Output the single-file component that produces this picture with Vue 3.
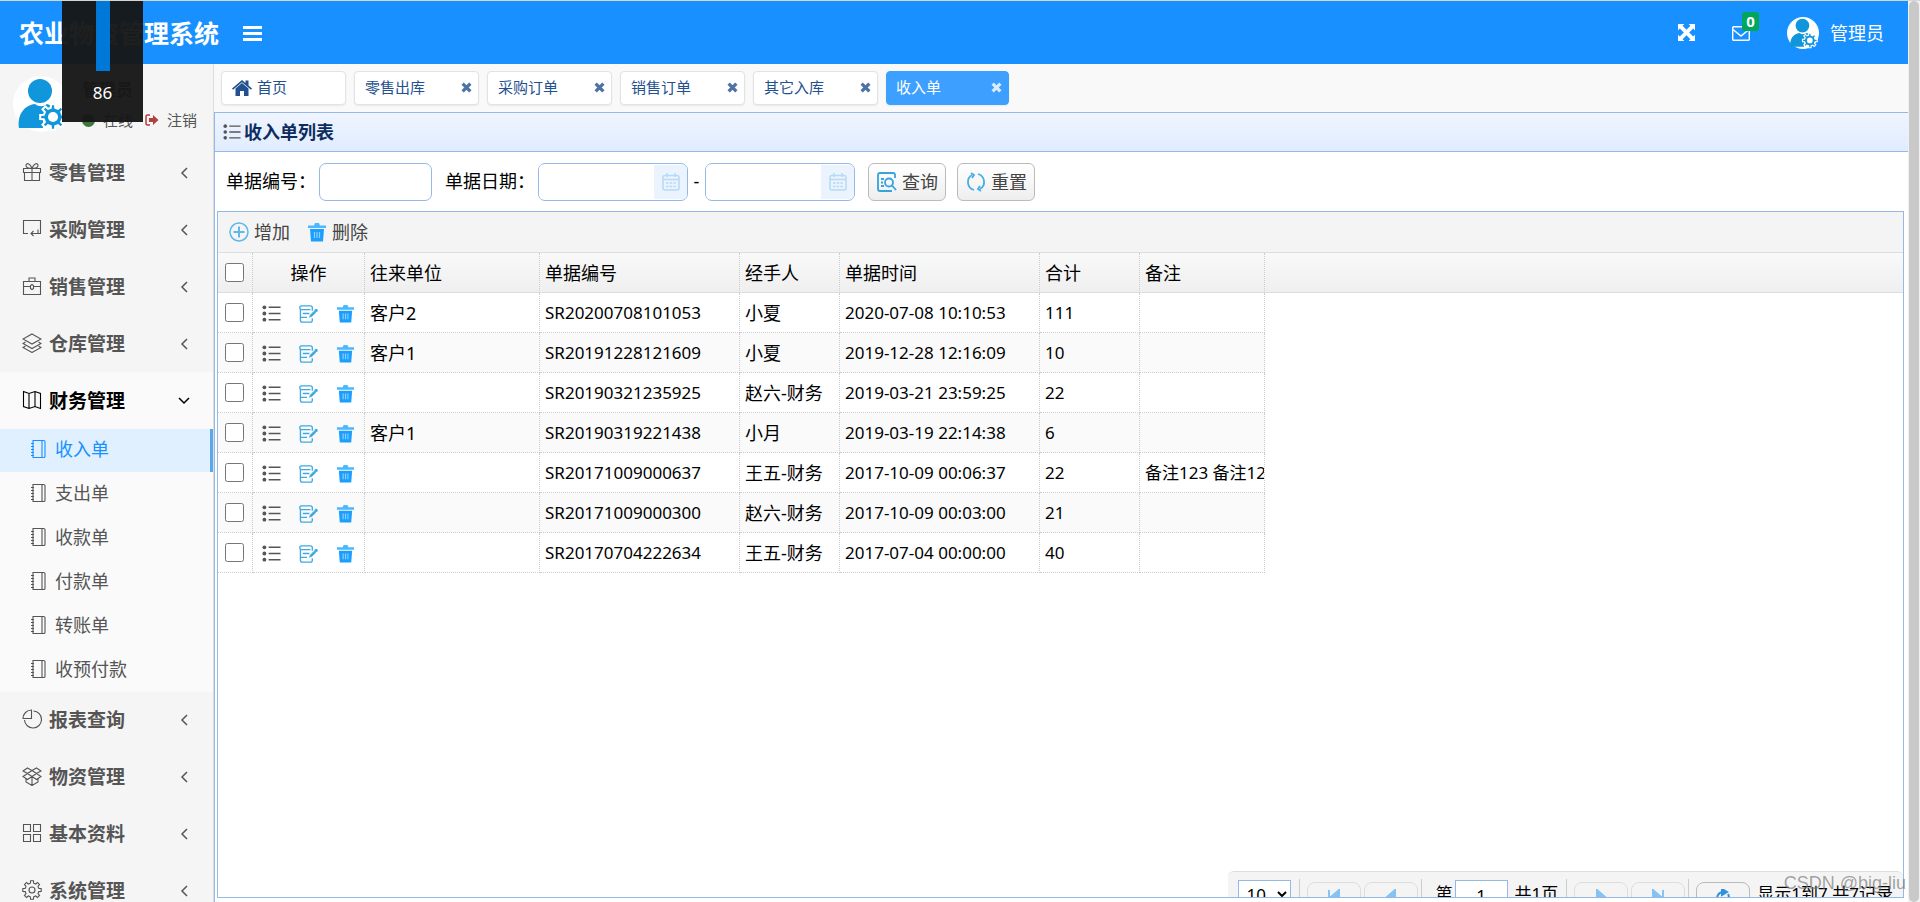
<script setup>
import { ref } from 'vue'

const gear = (cx, cy, outer, inner, teeth) => {
  const step = (Math.PI * 2) / teeth
  const pts = []
  for (let i = 0; i < teeth; i++) {
    const a = i * step - Math.PI / 2
    for (const [k, r] of [[-0.3, inner], [-0.2, outer], [0.2, outer], [0.3, inner]]) {
      pts.push((cx + r * Math.cos(a + k * step)).toFixed(2) + ' ' + (cy + r * Math.sin(a + k * step)).toFixed(2))
    }
  }
  return 'M' + pts.join('L') + 'Z'
}

const icons = {
  gift: 'M1.5 6.5h17v4h-17zM2.5 10.5v8h15v-8M10 6.5v12M10 6.5C8 1 4 .5 4 3.5c0 2 2 3 6 3M10 6.500c2-5.500 6-6 6-3 0 2-2 3-6 3',
  board: 'M6 14.500H1.500v-13h17v13H16M16 10.500v4H9M11.500 12L9 14.500l2.500 2.500',
  brief: 'M1.500 5.500h17v13h-17zM7 5.500v-3.500h6v3.500M1.500 10.500h7M11.500 10.500h7M10 8.500l1.500 1v3L10 13.500l-1.500-1v-3z',
  layers: 'M10 1l9 5-9 5-9-5zM3.500 9L1 10.500l9 5 9-5L16.500 9M3.500 13L1 14.500l9 5 9-5L16.500 13',
  map: 'M1.500 1.500L7 3.500l6-2 5.500 2v15l-5.500-2-6 2-5.500-2zM7 3.500v15M13 1.500v15',
  pie: 'M11.500 2A8.500 8.500 0 1 1 2.500 11M9.500 1v8.500H1A8.500 8.500 0 0 1 9.500 1z',
  box: 'M5.500 2L10 4.500 5.500 7.500 1 5zM14.500 2L19 5l-4.500 2.500L10 4.500zM5.500 7.500L10 10.500l-4.500 3L1 10.500zM14.500 7.500L19 10.500l-4.500 3-4.500-3zM4 13v3l6 3.500 6-3.500v-3M10 11v8',
  grid: 'M1.500 1.500h7v7h-7zM11.500 1.500h7v7h-7zM1.500 11.500h7v7h-7zM11.500 11.500h7v7h-7z',
  gear: gear(10, 10, 9.3, 7, 8) + 'M13 10a3 3 0 1 1-6 0a3 3 0 1 1 6 0z',
}

const menu = [
  { name: '零售管理', icon: 'gift' },
  { name: '采购管理', icon: 'board' },
  { name: '销售管理', icon: 'brief' },
  { name: '仓库管理', icon: 'layers' },
  { name: '财务管理', icon: 'map', children: ['收入单', '支出单', '收款单', '付款单', '转账单', '收预付款'] },
  { name: '报表查询', icon: 'pie' },
  { name: '物资管理', icon: 'box' },
  { name: '基本资料', icon: 'grid' },
  { name: '系统管理', icon: 'gear' },
]
const open = ref('财务管理')

const tabs = ['首页', '零售出库', '采购订单', '销售订单', '其它入库', '收入单']

const rows = [
  { unit: '客户2', no: 'SR20200708101053', by: '小夏', time: '2020-07-08 10:10:53', sum: '111', memo: '' },
  { unit: '客户1', no: 'SR20191228121609', by: '小夏', time: '2019-12-28 12:16:09', sum: '10', memo: '' },
  { unit: '', no: 'SR20190321235925', by: '赵六-财务', time: '2019-03-21 23:59:25', sum: '22', memo: '' },
  { unit: '客户1', no: 'SR20190319221438', by: '小月', time: '2019-03-19 22:14:38', sum: '6', memo: '' },
  { unit: '', no: 'SR20171009000637', by: '王五-财务', time: '2017-10-09 00:06:37', sum: '22', memo: '备注123 备注123' },
  { unit: '', no: 'SR20171009000300', by: '赵六-财务', time: '2017-10-09 00:03:00', sum: '21', memo: '' },
  { unit: '', no: 'SR20170704222634', by: '王五-财务', time: '2017-07-04 00:00:00', sum: '40', memo: '' },
]
</script>

<template>
  <div class="page">
    <svg class="defs" aria-hidden="true">
      <symbol id="avatar" viewBox="0 0 56 56">
        <circle cx="28" cy="28" r="28" fill="#fff" />
        <circle cx="27" cy="15" r="12" fill="#1296db" />
        <path d="M6 52C4 38 12 29 22 28c4 3 8 3 12 0 4 1 7 3 9 5l-13 6v13z" fill="#1296db" />
        <path :d="gear(40, 41, 13, 9.5, 8)" fill="#1296db" stroke="#fff" stroke-width="2" />
        <circle cx="40" cy="41" r="5" fill="#fff" />
      </symbol>
      <symbol id="trash" viewBox="0 0 20 20">
        <path d="M7 3.500L8 1h4l1 2.500h6V6H1V3.500z" fill="#4db8ff" />
        <path d="M3 7h14l-1 12.500H4z" fill="#1a9fff" />
        <path d="M7.500 10v6M10 10v6M12.500 10v6" stroke="#8fd0ff" stroke-width="1.200" />
      </symbol>
      <symbol id="list" viewBox="0 0 20 20">
        <path d="M7 3.500h12.500M7 10h12.500M7 16.500h12.500" stroke="#555" stroke-width="1.600" />
        <g fill="#555"><circle cx="2.500" cy="3.500" r="2" /><circle cx="2.500" cy="10" r="2" /><circle cx="2.500" cy="16.500" r="2" /></g>
      </symbol>
      <symbol id="edit" viewBox="0 0 20 20">
        <path d="M14 7V4q0-2-2-2H2.500Q.8 2 .8 4q0 2 2 2H12M1.500 6v11q0 2 2 2H12q2 0 2-2v-2M4 10h7M1.500 14h7" fill="none" stroke="#3fa9e0" stroke-width="1.400" />
        <path d="M10.500 14.500l1-3 4.500-4.500 2 2-4.500 4.500z" fill="#3fa9e0" /><circle cx="18" cy="6.800" r="1.700" fill="#3fa9e0" />
      </symbol>
    </svg>

    <div class="shell">
      <header class="top">
        <h1>农业物资管理系统</h1>
        <button class="burger" aria-label="菜单"><i></i><i></i><i></i></button>
        <div class="tools">
          <button class="full" aria-label="全屏">
            <svg viewBox="0 0 16 16" width="17" height="17" fill="#fff"><path d="M0 0h6L4.300 1.700 8 5.500l3.700-3.800L10 0h6v6l-1.700-1.700L10.500 8l3.800 3.700L16 10v6h-6l1.700-1.700L8 10.500l-3.700 3.800L6 16H0v-6l1.700 1.700L5.500 8 1.700 4.300 0 6z" /></svg>
          </button>
          <button class="mail" aria-label="消息">
            <svg viewBox="0 0 18 15" width="18" height="15" fill="none" stroke="#fff" stroke-width="1.400"><rect x=".7" y=".7" width="16.600" height="13.600" rx="1" /><path d="M1 3.500l8 6.500 8-6.500" /></svg>
            <span class="badge">0</span>
          </button>
          <a href="#" class="me"><svg width="32" height="32"><use href="#avatar" /></svg>管理员</a>
        </div>
      </header>

      <div class="main">
        <aside class="side">
          <div class="user">
            <svg class="face" width="56" height="56"><use href="#avatar" /></svg>
            <div>
              <strong>管理员</strong>
              <p>
                <a href="#"><i class="dot"></i>在线</a>
                <a href="#"><svg viewBox="0 0 14 12" width="14" height="12"><path d="M5 1H2.500Q1 1 1 2.500v7Q1 11 2.500 11H5" fill="none" stroke="#b0413e" stroke-width="1.500" /><path d="M4 4h4V1l5.500 5L8 11V8H4z" fill="#b0413e" /></svg>注销</a>
              </p>
            </div>
          </div>
          <nav>
            <div v-for="m in menu" :key="m.name" class="group" :class="{ open: open === m.name }">
              <button class="item" @click="open = m.name">
                <svg class="ico" viewBox="0 0 20 20"><path :d="icons[m.icon]" /></svg>
                <span>{{ m.name }}</span>
                <svg v-if="open === m.name" class="arrow" viewBox="0 0 12 12"><path d="M1 3l5 5 5-5" /></svg>
                <svg v-else class="arrow" viewBox="0 0 12 12"><path d="M9 1L4 6l5 5" /></svg>
              </button>
              <div v-if="m.children && open === m.name" class="subs">
                <a v-for="(c, i) in m.children" :key="c" href="#" :class="{ on: i === 0 }">
                  <svg viewBox="0 0 16 20" width="16" height="20"><path d="M3 1.500h10.500q1.500 0 1.500 1v15q0 1-1.500 1H3zM12 1.500v17M1 4.500h3M1 7.500h3M1 10.500h3M1 13.500h3M1 16.500h3" /></svg>{{ c }}
                </a>
              </div>
            </div>
          </nav>
        </aside>

        <section class="work">
          <div class="tabs">
            <a v-for="(t, i) in tabs" :key="t" href="#" class="tab" :class="{ on: i === 5 }">
              <svg v-if="i === 0" class="home" viewBox="0 0 20 17"><path d="M10 4l6.500 5.500V17h-4.500v-5H8v5H3.500V9.500z" /><path d="M0 9.500L10 1l3.500 3V1.500h3v5L20 9.500l-1 1.200L10 3.200 1 10.700z" /></svg>
              <span>{{ t }}</span>
              <svg v-if="i > 0" class="x" viewBox="0 0 10 10"><path d="M1.500 1.500l7 7M8.500 1.500l-7 7" /></svg>
            </a>
          </div>
          <div class="panel">
            <h2><svg width="18" height="18"><use href="#list" /></svg>收入单列表</h2>
            <form class="search" @submit.prevent>
              <label for="no">单据编号：</label>
              <input id="no" class="box" type="text" />
              <label for="from" class="second">单据日期：</label>
              <span v-for="(id, i) in ['from', 'to']" :key="id" class="range">
                <span v-if="i" class="dash">-</span>
                <span class="date">
                  <input :id="id" type="text" :aria-label="i ? '结束日期' : '开始日期'" />
                  <button type="button" aria-label="选择日期">
                    <svg viewBox="0 0 18 18" width="18" height="18" fill="none" stroke="#b5dcf5" stroke-width="1.600"><rect x="1" y="2.500" width="16" height="14.500" rx="2" /><path d="M1 6.500h16M5 0v4M13 0v4" /><path d="M4 10h10M4 13.500h10" stroke-dasharray="2.500 1.200" /></svg>
                  </button>
                </span>
              </span>
              <button class="btn first" type="submit">
                <svg viewBox="0 0 20 20" width="20" height="20" fill="none" stroke="#36a3dc" stroke-width="1.800"><path d="M18 6V3q0-2-2-2H3Q1 1 1 3v14q0 2 2 2h12M4 7h3M4 10.500h2M4 14h3" /><circle cx="12" cy="10.500" r="4" /><path d="M15 13.500l4 4.500" /></svg>查询
              </button>
              <button class="btn" type="reset">
                <svg viewBox="0 0 20 20" width="20" height="20" fill="none" stroke="#45aee2" stroke-width="1.800"><path d="M8 18A8.200 8.200 0 0 1 6 3M12 2a8.200 8.200 0 0 1 2 15" /><path d="M5 1l3 2-2 3M15 19l-3-2 2-3" /></svg>重置
              </button>
            </form>

            <div class="grid">
              <div class="bar">
                <button><svg viewBox="0 0 20 20" width="20" height="20" fill="none" stroke="#5fb8e8"><circle cx="10" cy="10" r="9" stroke-width="1.500" /><path d="M10 4.500v11M4.500 10h11" stroke-width="2" /></svg>增加</button>
                <button><svg width="20" height="20"><use href="#trash" /></svg>删除</button>
              </div>
              <div class="body">
                <table>
                  <colgroup>
                    <col class="c35" /><col class="c112" /><col class="c175" /><col class="c200" /><col class="c100" /><col class="c200" /><col class="c100" /><col class="c125" /><col />
                  </colgroup>
                  <thead>
                    <tr>
                      <th class="chk"><input type="checkbox" aria-label="全选" /></th>
                      <th class="mid">操作</th>
                      <th>往来单位</th><th>单据编号</th><th>经手人</th><th>单据时间</th><th>合计</th><th>备注</th><th class="rest"></th>
                    </tr>
                  </thead>
                  <tbody>
                    <tr v-for="r in rows" :key="r.no">
                      <td class="chk"><input type="checkbox" :aria-label="r.no" /></td>
                      <td class="ops">
                        <div>
                          <button aria-label="查看"><svg><use href="#list" /></svg></button>
                          <button aria-label="编辑"><svg><use href="#edit" /></svg></button>
                          <button aria-label="删除"><svg><use href="#trash" /></svg></button>
                        </div>
                      </td>
                      <td>{{ r.unit }}</td>
                      <td class="num">{{ r.no }}</td>
                      <td>{{ r.by }}</td>
                      <td class="num">{{ r.time }}</td>
                      <td class="num">{{ r.sum }}</td>
                      <td class="memo">{{ r.memo }}</td>
                    </tr>
                  </tbody>
                </table>
              </div>
              <div class="pager">
                <select aria-label="每页条数"><option>10</option></select>
                <i class="sep"></i>
                <button aria-label="第一页"><svg viewBox="0 0 16 16"><path d="M3 1v14M13 1v14L5 8z" /></svg></button>
                <button aria-label="上一页"><svg viewBox="0 0 16 16"><path d="M12 1v14L4 8z" /></svg></button>
                <i class="sep tight"></i>
                <label for="pg">第</label><input id="pg" type="text" value="1" /><span class="total">共1页</span>
                <i class="sep"></i>
                <button aria-label="下一页"><svg viewBox="0 0 16 16"><path d="M4 1v14l8-7z" /></svg></button>
                <button aria-label="最后一页"><svg viewBox="0 0 16 16"><path d="M13 1v14M3 1v14l8-7z" /></svg></button>
                <i class="sep tight"></i>
                <button class="live" aria-label="刷新"><svg viewBox="0 0 16 16"><path class="ring" d="M3 12A6 6 0 0 1 8 3M13 5a6 6 0 0 1-5 9" /><path d="M7 0l5 3-5 3z" /></svg></button>
                <span class="info">显示1到7,共7记录</span>
              </div>
            </div>
          </div>
        </section>
      </div>
    </div>
    <div class="scroll"><i></i></div>

    <div class="volume"><i></i><span>86</span></div>
    <div class="mark">CSDN @big-liu</div>
  </div>
</template>

<style>
body { margin: 0; overflow: hidden; }
</style>

<style scoped>
* { box-sizing: border-box; }
.page { display: flex; position: relative; height: 100vh; overflow: hidden; border-top: 1px solid #d6d6d6; background: #fff; color: #000; font: 400 18px/24px "Noto Sans", "Noto Sans CJK SC", sans-serif; }
.defs { position: absolute; width: 0; height: 0; }
svg { display: block; flex: none; }
button { padding: 0; border: 0; background: none; color: inherit; font: inherit; cursor: pointer; }
a { color: inherit; text-decoration: none; }
.shell { display: flex; flex-direction: column; flex: 1; min-width: 0; }
.scroll { flex: 0 0 12px; padding: 0 1px; background: #f1f1f1; }
.scroll i { display: block; height: 100%; border-radius: 5px; background: #c9c9c9; }

.top { display: flex; align-items: center; flex: 0 0 63px; padding: 0 24px 0 19px; background: #1890ff; color: #fff; }
h1 { margin: 0; font-size: 25px; line-height: 32px; font-weight: 700; }
.burger { display: grid; gap: 3px; width: 19px; margin: 2px 0 0 24px; }
.burger i { height: 3px; background: #fff; }
.tools { display: flex; align-items: center; margin-left: auto; }
.mail { position: relative; margin: 2px 37px 0; }
.badge { position: absolute; left: 10px; top: -14px; width: 17px; border-radius: 3px; background: #00a65a; font-size: 15px; line-height: 19px; font-weight: 700; }
.me { display: flex; align-items: center; gap: 11px; }

.main { display: flex; flex: 1; min-height: 0; }
.side { flex: 0 0 214px; overflow: hidden; border-right: 1px solid #ddd; background: #f5f5f5; color: #555; }
.user { display: flex; gap: 13px; height: 80px; padding: 12px 0 0 13px; font-size: 15px; line-height: 20px; }
.user strong { display: block; margin-top: 4px; font-size: 17px; }
.user p { display: flex; gap: 12px; margin: 10px 0 0; }
.user a { display: flex; align-items: center; gap: 8px; }
.dot { width: 13px; height: 13px; border-radius: 50%; background: #3c763d; }
.item { display: flex; align-items: center; width: 100%; height: 57px; padding: 0 22px; font-size: 19px; font-weight: 700; }
.item span { margin-left: 7px; }
.ico { width: 20px; height: 20px; margin-bottom: 2px; fill: none; stroke: currentColor; stroke-width: 1.1; }
.arrow { width: 14px; height: 12px; margin-left: auto; fill: none; stroke: currentColor; stroke-width: 1.5; }
.open { background: #fafafa; }
.open .item { color: #000; }
.subs { display: grid; gap: 1px; margin-bottom: -1px; }
.subs a { display: flex; align-items: center; gap: 9px; height: 43px; padding: 0 0 3px 30px; }
.subs svg { fill: none; stroke: currentColor; stroke-width: 1.1; }
.subs .on { border-right: 3px solid #5aa7ee; background: #e0f0ff; color: #1890ff; }

.work { display: flex; flex-direction: column; flex: 1; min-width: 0; }
.tabs { display: flex; gap: 8px; flex: 0 0 48px; padding: 7px 7px; background: #f9f9f9; }
.tab { display: flex; align-items: center; width: 125px; height: 34px; padding: 0 6px 2px 10px; border: 1px solid #e3e3e3; border-radius: 4px; background: #fff; box-shadow: 0 1px 2px #0001; color: #23508e; font-size: 15px; line-height: 20px; }
.tab.on { width: 123px; padding-left: 9px; border-color: #3d9fff; background: #3d9fff; color: #fff; }
.home { width: 20px; height: 17px; margin-right: 5px; fill: currentColor; }
.x { width: 11px; height: 11px; margin-left: auto; fill: none; stroke: currentColor; stroke-width: 3; opacity: .8; }

.panel { display: flex; flex-direction: column; flex: 1; min-height: 0; border-top: 1px solid #95b8e7; border-left: 1px solid #95b8e7; }
h2 { display: flex; align-items: center; gap: 3px; flex: 0 0 39px; margin: 0; padding-left: 8px; border-bottom: 1px solid #95b8e7; background: linear-gradient(#eff5ff, #e0ecff); color: #0e2d5f; font-size: 18px; line-height: 24px; font-weight: 700; }
.search { display: flex; align-items: center; padding: 11px 11px 10px; }
.search label { width: 93px; padding-bottom: 3px; white-space: nowrap; }
.search .second { margin-left: 13px; }
.box, .date { height: 38px; border: 1px solid #95b8e7; border-radius: 7px; background: #fff; overflow: hidden; }
.box { width: 113px; padding: 0 6px; font: inherit; }
.range { display: flex; align-items: center; }
.dash { width: 17px; padding-bottom: 3px; text-align: center; }
.date { display: flex; width: 150px; padding: 1px 0; }
.date input { flex: 1; min-width: 0; padding: 0 5px; border: 0; font: inherit; }
.date button { display: grid; place-items: center; width: 33px; background: #ebf3ff; }
.btn { display: flex; align-items: center; gap: 5px; height: 38px; margin-left: 11px; padding: 0 7px 0 8px; border: 1px solid #bbb; border-radius: 6px; background: linear-gradient(#fff, #eee); color: #444; }
.btn.first { margin-left: 13px; }

.grid { display: flex; flex-direction: column; flex: 1; min-height: 0; margin: 0 4px 4px 2px; border: 1px solid #95b8e7; }
.bar { display: flex; gap: 17px; flex: 0 0 41px; padding-left: 11px; border-bottom: 1px solid #ddd; background: #f4f4f4; color: #444; }
.bar button { display: flex; align-items: center; gap: 5px; }
.body { flex: 1; min-height: 0; overflow: hidden; }
table { width: 100%; border-spacing: 0; table-layout: fixed; }
.c35 { width: 35px; } .c112 { width: 112px; } .c175 { width: 175px; } .c200 { width: 200px; } .c100 { width: 100px; } .c125 { width: 125px; }
th, td { height: 40px; padding: 0 5px; border-right: 1px dotted #ccc; border-bottom: 1px dotted #ccc; overflow: hidden; white-space: nowrap; text-align: left; font-weight: inherit; }
th { border-bottom: 1px solid #ddd; background: linear-gradient(#f9f9f9, #efefef); }
.mid { text-align: center; }
.rest { border-right: 0; }
tbody tr:nth-child(even) td { background: #fafafa; }
.chk { padding: 0; text-align: center; }
.chk input { display: block; width: 19px; height: 19px; margin: 0 auto 0 7px; }
.ops { padding: 2px 0 0 9px; }
.ops div { display: flex; gap: 18px; }
.ops svg { width: 19px; height: 19px; }
.num, .memo { font-size: 17px; }
.memo { padding-right: 0; text-overflow: clip; }

.pager { display: flex; align-items: flex-start; flex: 0 0 26px; margin-left: auto; padding: 8px 10px 0; overflow: hidden; border-top: 1px solid #ddd; border-radius: 6px 6px 0 0; background: #f4f4f4; font-size: 17px; }
.pager select { width: 53px; height: 28px; padding-left: 4px; border: 1px solid #95b8e7; background: #fff; font: inherit; }
.sep { width: 2px; height: 36px; margin: -1px 6px 0 8px; border-left: 1px solid #ccc; }
.sep.tight { margin-left: 0; }
.pager button { display: grid; justify-items: center; width: 54px; height: 36px; margin: 2px 3px 0 0; padding-top: 6px; border: 1px solid #ddd; border-radius: 8px; }
.pager svg { width: 16px; height: 16px; fill: #85c4f2; stroke: #85c4f2; stroke-width: 2; }
.pager .live { border-color: #bbb; }
.pager .live svg { fill: #2f93dd; stroke: #2f93dd; }
.pager .live .ring { fill: none; }
.pager label { margin: 2px 2px 0 7px; }
.pager input { width: 53px; height: 30px; padding: 0; border: 1px solid #95b8e7; font: inherit; text-align: center; }
.total { margin: 2px 0 0 7px; }
.info { margin: 2px 0 0 4px; white-space: nowrap; }

.volume { position: absolute; left: 62px; top: -1px; display: flex; flex-direction: column; align-items: center; width: 81px; height: 122px; background: rgba(22, 22, 22, .96); color: #fff; font-size: 17px; }
.volume i { width: 14px; height: 71px; background: #0078d7; }
.volume span { margin-top: 10px; }
.mark { position: absolute; right: 14px; bottom: 7px; color: #777a; font-size: 18px; line-height: 24px; font-family: "Liberation Sans", sans-serif; }
</style>
